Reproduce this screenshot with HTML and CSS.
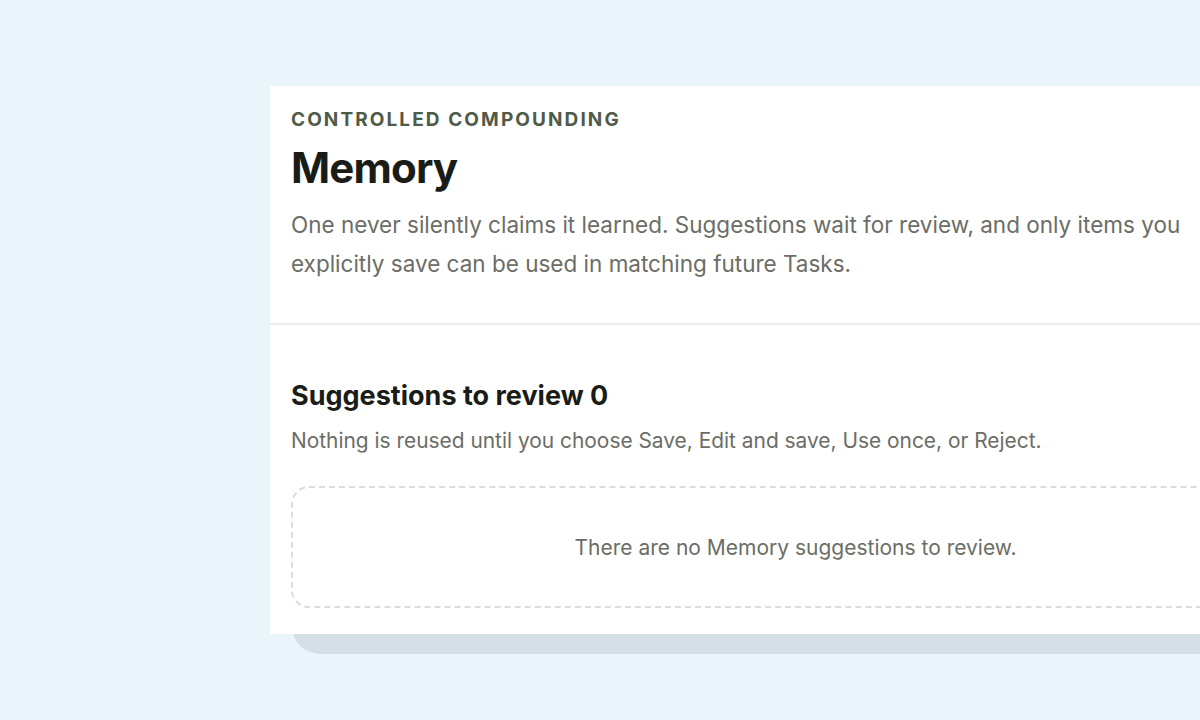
FILE: index.html
```html
<!DOCTYPE html>
<html lang="en">
<head>
    <meta charset="UTF-8">
    <meta name="viewport" content="width=device-width, initial-scale=1.0">
    <title>Memory</title>
    <link rel="stylesheet" href="styles.css">
</head>
<body>

<div class="stage">
    <div class="card">
        <header class="card-head">
            <p class="eyebrow">Controlled compounding</p>
            <h1>Memory</h1>
            <p class="lead">One never silently claims it learned. Suggestions wait for review, and only items you explicitly save can be used in matching future Tasks.</p>
        </header>

        <section class="review">
            <h2>Suggestions to review <span class="count">0</span></h2>
            <p class="hint">Nothing is reused until you choose Save, Edit and save, Use once, or Reject.</p>
            <div class="empty">There are no Memory suggestions to review.</div>
        </section>
    </div>
</div>

</body>
</html>
```

FILE: styles.css
```css
html, body {
    margin: 0;
    height: 100%;
    overflow: hidden;
}
body {
    font-family: Inter, "Noto Sans", sans-serif;
    background-color: #eaf4fb;
}
.stage {
    padding: 86px 0 0 270px;
}
.card {
    position: relative;
    width: 1051px;
    background: #fff;
}
/* capa de atrás, se asoma por debajo */
.card::after {
    content: "";
    position: absolute;
    left: 22px;
    right: 0;
    bottom: -20px;
    height: 60px;
    background: #d4dee5;
    border-radius: 0 0 0 28px;
    z-index: -1;
}
.card-head {
    padding: 22px 21px 40px;
    border-bottom: 2px solid #ececec;
}
.eyebrow {
    margin: 0;
    font-size: 19px;
    font-weight: 700;
    letter-spacing: 0.11em;
    text-transform: uppercase;
    color: #4f5a48;
}
h1 {
    margin: 11px 0 12px;
    font-size: 42px;
    font-weight: 700;
    letter-spacing: -0.02em;
    color: #1a1c18;
}
.lead {
    margin: 0;
    max-width: 920px;
    font-size: 22.5px;
    line-height: 39px;
    color: #6b6d66;
}
.review {
    padding: 54px 21px 26px;
}
h2 {
    margin: 0 0 16px;
    font-size: 27px;
    font-weight: 700;
    color: #1a1c18;
}
.hint {
    margin: 0 0 33px;
    font-size: 20.9px;
    color: #6b6d66;
}
.empty {
    height: 118px;
    display: flex;
    align-items: center;
    justify-content: center;
    border: 2px dashed #dcdcdc;
    border-radius: 18px;
    font-size: 21px;
    color: #6b6d66;
}
```
